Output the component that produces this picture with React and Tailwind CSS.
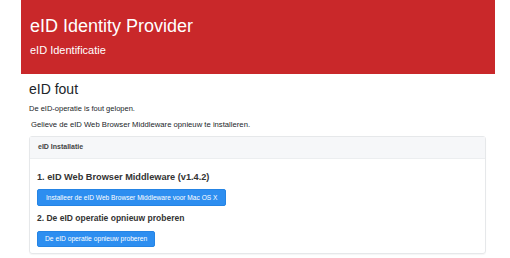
export default function App() {
  return (
    <div className="w-[510px] h-[258px] bg-white overflow-hidden font-['Liberation_Sans',Arial,sans-serif] text-[#212529]">
      <div className="ml-[21px] w-[474px]">
        <div className="bg-[#c9282a] h-[74px] px-[9px] pt-[15px] text-white">
          <h1 className="text-[18px] leading-[22px]">eID Identity Provider</h1>
          <p className="text-[11px] leading-[16px] mt-[5px]">eID Identificatie</p>
        </div>

        <div className="px-[8px] pt-[6px]">
          <h2 className="text-[14px] leading-[18px]">eID fout</h2>
          <p className="text-[7.5px] leading-[10px] mt-[6px]">De eID-operatie is fout gelopen.</p>
          <p className="text-[7.7px] leading-[10px] mt-[6px] pl-[2px]">
            Gelieve de eID Web Browser Middleware opnieuw te installeren.
          </p>

          <div className="mt-[6px] w-[457px] border border-[#e6e8ea] rounded-[3px] shadow-[0_1px_1px_rgba(0,0,0,0.04)]">
            <div className="bg-[#f6f7f9] h-[22px] border-b border-[#eceef0] px-[8px] flex items-center">
              <span className="text-[7px] font-bold text-[#444]">eID Installatie</span>
            </div>
            <div className="px-[7px] pt-[12px] pb-[5px]">
              <h3 className="text-[9.2px] font-bold leading-[12px] text-[#333]">1. eID Web Browser Middleware (v1.4.2)</h3>
              <button className="mt-[5px] h-[17px] px-[8px] bg-[#2d8ef0] text-white text-[6.6px] rounded-[2px] border border-[#2584e4]">
                Installeer de eID Web Browser Middleware voor Mac OS X
              </button>
              <h3 className="mt-[5px] text-[8.5px] font-bold leading-[12px] text-[#333]">2. De eID operatie opnieuw proberen</h3>
              <button className="mt-[6px] h-[16px] px-[7px] bg-[#2d8ef0] text-white text-[6.7px] rounded-[2px] border border-[#2584e4]">
                De eID operatie opnieuw proberen
              </button>
            </div>
          </div>
        </div>
      </div>
    </div>
  );
}
